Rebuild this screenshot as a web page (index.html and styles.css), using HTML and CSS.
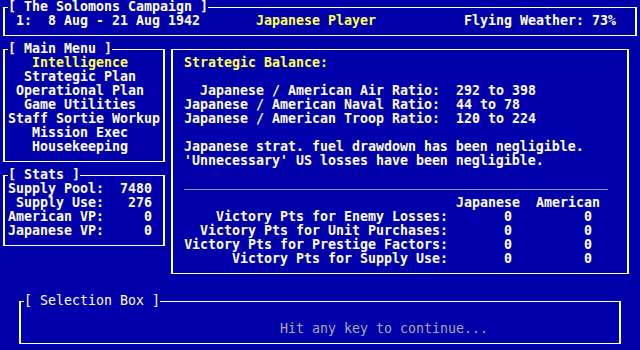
FILE: index.html
```html
<!DOCTYPE html>
<html lang="en">
<head>
<meta charset="utf-8">
<title>The Solomons Campaign</title>
<link rel="stylesheet" href="styles.css">
</head>
<body>
<div class="screen">
  <header class="box top">
    <div class="title">[ The Solomons Campaign ]</div>
    <div class="status">
      <span class="turn">1:  8 Aug - 21 Aug 1942</span>
      <span class="side">Japanese Player</span>
      <span class="weather">Flying Weather: 73%</span>
    </div>
  </header>

  <div class="main">
    <div class="left">
      <nav class="box menu">
        <div class="title">[ Main Menu ]</div>
        <ul class="items">
          <li class="active">Intelligence</li>
          <li>Strategic Plan</li>
          <li>Operational Plan</li>
          <li>Game Utilities</li>
          <li>Staff Sortie Workup</li>
          <li>Mission Exec</li>
          <li>Housekeeping</li>
        </ul>
      </nav>
      <section class="box stats">
        <div class="title">[ Stats ]</div>
        <div class="stat-grid">
          <span>Supply Pool:</span><span>7480</span>
          <span>Supply Use:</span><span>276</span>
          <span>American VP:</span><span>0</span>
          <span>Japanese VP:</span><span>0</span>
        </div>
      </section>
    </div>

    <section class="box balance">
      <div class="heading">Strategic Balance:</div>
      <div class="ratios">
        <span>Japanese / American Air Ratio:</span><span>292 to 398</span>
        <span>Japanese / American Naval Ratio:</span><span>44 to 78</span>
        <span>Japanese / American Troop Ratio:</span><span>120 to 224</span>
      </div>
      <div class="notes">
        <div>Japanese strat. fuel drawdown has been negligible.</div>
        <div>'Unnecessary' US losses have been negligible.</div>
      </div>
      <hr class="rule">
      <div class="vp-head"><span>Japanese</span><span>American</span></div>
      <div class="vp">
        <span>Victory Pts for Enemy Losses:</span><span>0</span><span>0</span>
        <span>Victory Pts for Unit Purchases:</span><span>0</span><span>0</span>
        <span>Victory Pts for Prestige Factors:</span><span>0</span><span>0</span>
        <span>Victory Pts for Supply Use:</span><span>0</span><span>0</span>
      </div>
    </section>
  </div>

  <section class="box selection">
    <div class="title">[ Selection Box ]</div>
    <div class="prompt">Hit any key to continue...</div>
  </section>
</div>
</body>
</html>
```

FILE: styles.css
```css
html, body {
  margin: 0;
  padding: 0;
  background: #0000AA;
}

body {
  width: 640px;
  height: 350px;
  overflow: hidden;
  font-family: "DejaVu Sans Mono", "Liberation Mono", monospace;
  font-size: 13.29px;
  font-weight: bold;
  line-height: 14px;
  color: #FFFFFF;
}

.screen {
  padding: 7px 0 0 3px;
}

.box {
  box-sizing: border-box;
  border-style: solid;
  border-color: #FFFFFF;
  border-width: 1px 2px;
}

.title {
  width: max-content;
  margin: -8px 0 0 3px;
  background: #0000AA;
  white-space: pre;
}

/* header */
.top {
  width: 634px;
  height: 29px;
}

.status {
  display: grid;
  grid-template-columns: 240px 208px auto;
  padding-left: 11px;
}

.turn {
  white-space: pre;
}

.side {
  color: #FFFF55;
}

/* main area */
.main {
  display: flex;
  align-items: flex-start;
  gap: 6px;
  margin-top: 13px;
}

.left {
  display: flex;
  flex-direction: column;
  gap: 13px;
}

.menu {
  width: 162px;
  height: 113px;
}

.items {
  list-style: none;
  margin: 0 0 0 3px;
  padding: 0;
  width: 144px;
  text-align: center;
  white-space: nowrap;
}

.items .active {
  color: #FFFF55;
}

.stats {
  width: 162px;
  height: 71px;
}

.stat-grid {
  display: grid;
  grid-template-columns: 96px 48px;
  margin-left: 3px;
  text-align: right;
}

/* strategic balance panel */
.balance {
  width: 458px;
  height: 225px;
  padding: 6px 0 0 11px;
}

.heading {
  color: #FFFF55;
}

.ratios {
  display: grid;
  grid-template-columns: 256px auto;
  column-gap: 16px;
  margin-top: 14px;
}

.ratios span:nth-child(odd) {
  justify-self: end;
}

.notes {
  margin-top: 14px;
}

.rule {
  width: 424px;
  height: 0;
  margin: 21px 0 6px 0;
  border: 0;
  border-top: 1px solid #9999DD;
}

.vp-head {
  display: flex;
  gap: 16px;
  padding-left: 272px;
}

.vp {
  display: grid;
  grid-template-columns: 264px 64px 80px;
  text-align: right;
}

/* selection box */
.selection {
  width: 602px;
  height: 43px;
  margin: 27px 0 0 16px;
}

.selection .title {
  font-weight: normal;
}

.prompt {
  margin: 14px 0 0 259px;
  font-weight: normal;
  color: #AAAAAA;
}
```
